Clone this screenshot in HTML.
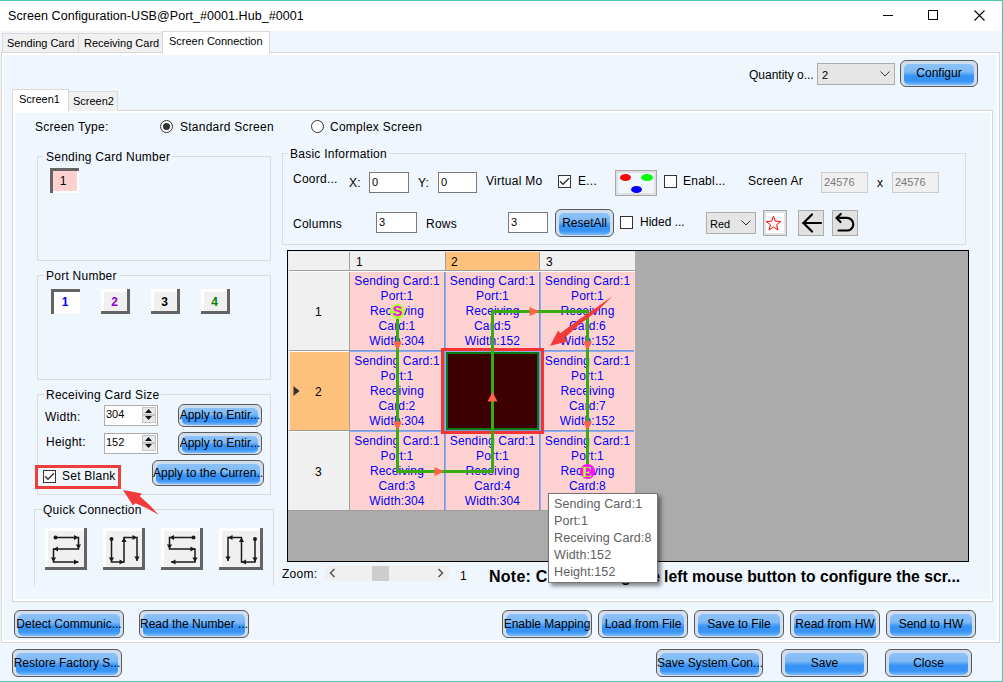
<!DOCTYPE html>
<html><head><meta charset="utf-8">
<style>
*{margin:0;padding:0;box-sizing:border-box}
html,body{width:1003px;height:682px;overflow:hidden}
body{position:relative;background:#eff6fe;font-family:"Liberation Sans",sans-serif;font-size:12px;color:#000}
.a{position:absolute}
.t{position:absolute;white-space:nowrap;line-height:14px;height:14px;letter-spacing:0.25px}
.tab{position:absolute;background:#f0f0f0;border:1px solid #d9d9d9;border-bottom:none}
.pnl{position:absolute;border:1px solid #d6d6d6;box-shadow:inset 0 0 0 2px #fff}
.grp{position:absolute;border:1px solid #dcdcdc}
.lbl{position:absolute;background:#eff6fe;padding:0 2px;white-space:nowrap;line-height:14px;margin-top:1px;letter-spacing:0.25px}
.btn{position:absolute;border:1px solid #5a5a5a;border-radius:6px;background:#cfdded;overflow:hidden}
.btn i{position:absolute;left:3px;right:3px;top:3px;bottom:1px;border-radius:5px;
 background:linear-gradient(#8dc2f7 0,#7db9f6 38%,#58a5f6 47%,#3592f6 58%,#3a95f6 82%,#7cbaf7 100%)}
.btn b{position:absolute;left:0;right:0;top:0;bottom:0;font-weight:normal;text-align:center;white-space:nowrap;color:#000}
.inp{position:absolute;background:#fff;border:1px solid #7a7a7a;white-space:nowrap;padding-left:2px;line-height:18px;font-size:11px}
.chk{position:absolute;width:13px;height:13px;border:1px solid #333;background:#fff}
.sunk{position:absolute;box-shadow:inset 3px 3px 0 #646464,inset -2px -2px 0 #fff;text-align:center;font-weight:bold}
.rais{position:absolute;box-shadow:inset -3px -3px 0 #646464,inset 3px 3px 0 #fff;background:#f0f0f0;text-align:center;font-weight:bold}
</style></head><body>
<!-- window frame -->
<div class="a" style="left:0;top:0;width:1003px;height:31px;background:#fff"></div>
<div class="a" style="left:0;top:0;width:1003px;height:1px;background:#4cc8ae"></div>
<div class="a" style="left:1002px;top:0;width:1px;height:682px;background:#4cc8ae"></div>
<div class="a" style="left:0;top:681px;width:1003px;height:1px;background:#4cc8ae"></div>
<div class="t" style="left:8px;top:9px;font-size:12.5px;letter-spacing:0.07px">Screen Configuration-USB@Port_#0001.Hub_#0001</div>
<!-- window controls -->
<div class="a" style="left:883px;top:15px;width:10px;height:1px;background:#000"></div>
<div class="a" style="left:928px;top:10px;width:10px;height:10px;border:1px solid #000"></div>
<svg class="a" style="left:974px;top:10px" width="11" height="11"><path d="M0.5 0.5L10.5 10.5M10.5 0.5L0.5 10.5" stroke="#000" stroke-width="1.1"/></svg>

<!-- outer tabs -->
<div class="pnl" style="left:1px;top:52px;width:999px;height:591px;"></div>
<div class="tab" style="left:2px;top:33px;width:77px;height:19px;"></div>
<div class="t" style="left:7px;top:36px;font-size:11px;letter-spacing:0">Sending Card</div>
<div class="tab" style="left:78px;top:33px;width:85px;height:19px;"></div>
<div class="t" style="left:84px;top:36px;font-size:11px;letter-spacing:0">Receiving Card</div>
<div class="tab" style="left:162px;top:31px;width:108px;height:23px;background:#fff;"></div>
<div class="t" style="left:169px;top:34px;font-size:11px;letter-spacing:0">Screen Connection</div>

<!-- quantity -->
<div class="t" style="left:749px;top:68px;letter-spacing:0">Quantity o...</div>
<div class="a" style="left:817px;top:63px;width:78px;height:22px;background:#e5e5e5;border:1px solid #adadad"></div>
<div class="t" style="left:822px;top:68px;font-size:11px">2</div>
<svg class="a" style="left:880px;top:71px" width="10" height="6"><path d="M0.5 0.5L5 5L9.5 0.5" stroke="#333" fill="none"/></svg>
<div class="btn" style="left:900px;top:60px;width:78px;height:27px;"><i></i><b style="line-height:25px">Configur</b></div>

<!-- inner tabs -->
<div class="pnl" style="left:12px;top:110px;width:981px;height:492px;"></div>
<div class="tab" style="left:12px;top:89px;width:57px;height:23px;background:#fff;"></div>
<div class="t" style="left:19px;top:92px;font-size:11px;letter-spacing:0">Screen1</div>
<div class="tab" style="left:68px;top:91px;width:50px;height:20px;"></div>
<div class="t" style="left:73px;top:94px;font-size:11px;letter-spacing:0">Screen2</div>

<!-- screen type -->
<div class="t" style="left:35px;top:120px;">Screen Type:</div>
<div class="a" style="left:160px;top:120px;width:13px;height:13px;border-radius:50%;border:1px solid #333;background:#fff"></div>
<div class="a" style="left:163px;top:123px;width:7px;height:7px;border-radius:50%;background:#333"></div>
<div class="t" style="left:180px;top:120px;">Standard Screen</div>
<div class="a" style="left:311px;top:120px;width:13px;height:13px;border-radius:50%;border:1px solid #333;background:#fff"></div>
<div class="t" style="left:330px;top:120px;">Complex Screen</div>


<!-- left column groups -->
<div class="grp" style="left:37px;top:156px;width:234px;height:105px;"></div>
<div class="lbl" style="left:44px;top:149px;">Sending Card Number</div>
<div class="sunk" style="left:50px;top:168px;width:29px;height:25px;background:#ffd0d0;font-weight:normal;line-height:26px;padding-right:3px">1</div>

<div class="grp" style="left:37px;top:275px;width:234px;height:105px;"></div>
<div class="lbl" style="left:44px;top:268px;">Port Number</div>
<div class="sunk" style="left:51px;top:289px;width:29px;height:25px;background:#fff;color:#0000ff;line-height:26px;padding-right:1px">1</div>
<div class="rais" style="left:101px;top:289px;width:29px;height:25px;color:#9400d3;line-height:27px;padding-right:2px;">2</div>
<div class="rais" style="left:151px;top:289px;width:29px;height:25px;color:#000;line-height:27px;padding-right:2px;">3</div>
<div class="rais" style="left:201px;top:289px;width:29px;height:25px;color:#008000;line-height:27px;padding-right:2px;">4</div>

<div class="grp" style="left:37px;top:394px;width:234px;height:101px;"></div>
<div class="lbl" style="left:44px;top:387px;">Receiving Card Size</div>
<div class="t" style="left:45px;top:410px;">Width:</div>
<div class="t" style="left:46px;top:435px;">Height:</div>
<div class="inp" style="left:104px;top:405px;width:54px;height:21px;border-color:#adadad;line-height:17px;padding-left:1px">304</div>
<div class="inp" style="left:104px;top:433px;width:54px;height:21px;border-color:#adadad;line-height:17px;padding-left:1px">152</div>

<div class="btn" style="left:178px;top:404px;width:84px;height:23px;"><i></i><b style="line-height:21px">Apply to Entir...</b></div>
<div class="btn" style="left:178px;top:432px;width:84px;height:23px;"><i></i><b style="line-height:21px">Apply to Entir...</b></div>
<div class="btn" style="left:152px;top:460px;width:112px;height:26px;"><i></i><b style="line-height:24px">Apply to the Curren...</b></div>

<div class="a" style="left:35px;top:465px;width:86px;height:24px;border:3px solid #ee3d3d"></div>
<div class="chk" style="left:43px;top:470px;"></div>
<div class="t" style="left:62px;top:469px;">Set Blank</div>

<div class="grp" style="left:34px;top:509px;width:240px;height:77px;border-bottom:none"></div>
<div class="lbl" style="left:41px;top:502px;">Quick Connection</div>
<div class="rais" style="left:45px;top:528px;width:42px;height:42px;"></div>
<div class="rais" style="left:103px;top:528px;width:42px;height:42px;"></div>
<div class="rais" style="left:161px;top:528px;width:42px;height:42px;"></div>
<div class="rais" style="left:219px;top:528px;width:44px;height:42px;"></div>


<!-- basic information -->
<div class="grp" style="left:282px;top:153px;width:684px;height:92px;"></div>
<div class="lbl" style="left:288px;top:146px;">Basic Information</div>
<div class="t" style="left:293px;top:172px;">Coord...</div>
<div class="t" style="left:349px;top:176px;">X:</div>
<div class="inp" style="left:369px;top:172px;width:40px;height:21px;">0</div>
<div class="t" style="left:418px;top:176px;">Y:</div>
<div class="inp" style="left:438px;top:172px;width:39px;height:21px;">0</div>
<div class="t" style="left:486px;top:174px;">Virtual Mo</div>
<div class="chk" style="left:558px;top:175px;"></div>
<div class="t" style="left:578px;top:174px;">E...</div>
<div class="a" style="left:615px;top:170px;width:42px;height:26px;background:#eff6fe;border:1px solid #a8a8a8;box-shadow:inset 0 0 0 2px #e0e0e0"></div>
<div class="a" style="left:620px;top:174px;width:11px;height:7px;border-radius:50%;background:#f00"></div>
<div class="a" style="left:641px;top:174px;width:12px;height:7px;border-radius:50%;background:#0f0"></div>
<div class="a" style="left:631px;top:186px;width:11px;height:7px;border-radius:50%;background:#00f"></div>
<div class="chk" style="left:664px;top:175px;"></div>
<div class="t" style="left:683px;top:174px;">Enabl...</div>
<div class="t" style="left:748px;top:174px;">Screen Ar</div>
<div class="inp" style="left:821px;top:172px;width:47px;height:21px;background:#f0f0f0;border-color:#ccc;color:#7a7a7a">24576</div>
<div class="t" style="left:877px;top:176px;">x</div>
<div class="inp" style="left:892px;top:172px;width:47px;height:21px;background:#f0f0f0;border-color:#ccc;color:#7a7a7a">24576</div>

<div class="t" style="left:293px;top:217px;">Columns</div>
<div class="inp" style="left:376px;top:212px;width:41px;height:21px;">3</div>
<div class="t" style="left:426px;top:217px;">Rows</div>
<div class="inp" style="left:508px;top:212px;width:40px;height:21px;">3</div>
<div class="btn" style="left:555px;top:209px;width:59px;height:28px;"><i></i><b style="line-height:26px">ResetAll</b></div>
<div class="chk" style="left:620px;top:216px;"></div>
<div class="t" style="left:640px;top:215px;letter-spacing:0">Hided ...</div>
<div class="a" style="left:706px;top:212px;width:50px;height:22px;background:#e5e5e5;border:1px solid #adadad"></div>
<div class="t" style="left:710px;top:217px;font-size:11px;letter-spacing:0">Red</div>
<svg class="a" style="left:741px;top:220px" width="10" height="6"><path d="M0.5 0.5L5 5L9.5 0.5" stroke="#333" fill="none"/></svg>
<div class="a" style="left:763px;top:210px;width:24px;height:26px;background:#fff;border:1px solid #a8a8a8;box-shadow:inset 0 0 0 2px #e1e1e1"></div>
<div class="a" style="left:798px;top:210px;width:26px;height:26px;background:#e1e1e1;border:1px solid #adadad"></div>
<div class="a" style="left:832px;top:210px;width:26px;height:26px;background:#e1e1e1;border:1px solid #adadad"></div>

<!-- grid -->
<div class="a" style="left:287px;top:250px;width:682px;height:312px;background:#ababab;border:1px solid #000"></div>


<style>
.cell{position:absolute;text-align:center;line-height:15px;color:#0000f8;white-space:nowrap;letter-spacing:0.15px;margin-top:1px}
</style>
<div class="a" style="left:288px;top:251px;width:347px;height:1px;background:#e8e8e8"></div>
<div class="a" style="left:288px;top:251px;width:1px;height:259px;background:#e8e8e8"></div>
<div class="a" style="left:288px;top:510px;width:347px;height:1px;background:#a0a0a0"></div>
<!-- header row -->
<div class="a" style="left:289px;top:252px;width:346px;height:18px;background:#f0f0f0"></div>
<div class="a" style="left:446px;top:252px;width:93px;height:18px;background:#fdc17b"></div>
<div class="a" style="left:289px;top:270px;width:346px;height:1px;background:#a0a0a0"></div>
<div class="a" style="left:289px;top:271px;width:346px;height:1px;background:#fafafa"></div>
<div class="a" style="left:349px;top:252px;width:1px;height:18px;background:#a0a0a0"></div>
<div class="a" style="left:445px;top:252px;width:1px;height:18px;background:#a0a0a0"></div>
<div class="a" style="left:539px;top:252px;width:1px;height:18px;background:#a0a0a0"></div>
<div class="t" style="left:356px;top:255px;">1</div>
<div class="t" style="left:451px;top:255px;">2</div>
<div class="t" style="left:546px;top:255px;">3</div>
<!-- row headers -->
<div class="a" style="left:289px;top:272px;width:60px;height:238px;background:#f0f0f0"></div>
<div class="a" style="left:290px;top:352px;width:59px;height:78px;background:#fdc17b"></div>
<div class="a" style="left:289px;top:350px;width:60px;height:1px;background:#a0a0a0"></div>
<div class="a" style="left:289px;top:351px;width:60px;height:1px;background:#fafafa"></div>
<div class="a" style="left:289px;top:430px;width:60px;height:1px;background:#a0a0a0"></div>
<div class="a" style="left:289px;top:431px;width:60px;height:1px;background:#fafafa"></div>
<div class="a" style="left:349px;top:272px;width:1px;height:238px;background:#a0a0a0"></div>
<div class="t" style="left:315px;top:305px;">1</div>
<div class="t" style="left:315px;top:385px;">2</div>
<div class="t" style="left:315px;top:465px;">3</div>
<svg class="a" style="left:293px;top:385px" width="8" height="12"><path d="M0.5 1L6.5 6L0.5 11Z" fill="#333"/></svg>
<!-- cells -->
<div class="a" style="left:350px;top:272px;width:285px;height:238px;background:#ffd2d2"></div>
<div class="a" style="left:444px;top:272px;width:2px;height:238px;background:linear-gradient(90deg,#6a8ed8,#9ab6f0)"></div>
<div class="a" style="left:539px;top:272px;width:2px;height:238px;background:linear-gradient(90deg,#6a8ed8,#9ab6f0)"></div>
<div class="a" style="left:350px;top:350px;width:284px;height:2px;background:linear-gradient(#6a8ed8,#9ab6f0)"></div>
<div class="a" style="left:350px;top:430px;width:284px;height:2px;background:linear-gradient(#6a8ed8,#9ab6f0)"></div>
<div class="cell" style="left:350px;top:273px;width:94px;">Sending Card:1<br>Port:1<br>Receiving<br>Card:1<br>Width:304</div>
<div class="cell" style="left:446px;top:273px;width:93px;">Sending Card:1<br>Port:1<br>Receiving<br>Card:5<br>Width:152</div>
<div class="cell" style="left:541px;top:273px;width:93px;">Sending Card:1<br>Port:1<br>Receiving<br>Card:6<br>Width:152</div>
<div class="cell" style="left:350px;top:353px;width:94px;">Sending Card:1<br>Port:1<br>Receiving<br>Card:2<br>Width:304</div>
<div class="cell" style="left:541px;top:353px;width:93px;">Sending Card:1<br>Port:1<br>Receiving<br>Card:7<br>Width:152</div>
<div class="cell" style="left:350px;top:433px;width:94px;">Sending Card:1<br>Port:1<br>Receiving<br>Card:3<br>Width:304</div>
<div class="cell" style="left:446px;top:433px;width:93px;">Sending Card:1<br>Port:1<br>Receiving<br>Card:4<br>Width:304</div>
<div class="cell" style="left:541px;top:433px;width:93px;">Sending Card:1<br>Port:1<br>Receiving<br>Card:8<br>Width:152</div>

<!-- blank block -->
<div class="a" style="left:446px;top:352px;width:93px;height:78px;border:2px solid #087a12;background:#3c0000"></div>
<div class="a" style="left:441px;top:348px;width:103px;height:86px;border:3px solid #f43434"></div>
<!-- path -->
<svg class="a" style="left:0;top:0" width="1003" height="682">
<path d="M397.5 311V471.5H492.5V311.5H587.5V471" stroke="#36ac10" stroke-width="3" fill="none"/>
<g fill="#ff6347">
<path d="M393 341.5H402L397.5 350.5Z"/>
<path d="M393 421.5H402L397.5 430.5Z"/>
<path d="M434.5 467V476L444 471.5Z"/>
<path d="M487.5 401.5H497.5L492.5 392Z"/>
<path d="M529.5 307V316L539.5 311.5Z"/>
<path d="M583 341.5H592L587.5 350.5Z"/>
<path d="M583 421.5H592L587.5 430.5Z"/>
</g>
<circle cx="397.5" cy="311.5" r="7.5" fill="#adff2f"/>
<circle cx="587.5" cy="471.5" r="7.5" fill="#ff10f0"/>
<text x="397.5" y="315.8" text-anchor="middle" font-family="Liberation Sans" font-weight="bold" font-size="15" fill="#ff00ff">S</text>
<text x="587" y="476.5" text-anchor="middle" font-family="Liberation Serif" font-weight="bold" font-size="15.5" fill="#adff2f">E</text>
<!-- annotation arrows -->
<path d="M550.1 345.8L567.1 341.7L565 337.6L580 324L598 310.6L612.3 296.3L598 306.4L580 318.8L560.3 333.2L558.1 330.4Z" fill="#f23a3a"/>
<path d="M123 490L141.7 493.5L139.8 496.3L150 505.5L158.8 515L148.5 509L135.6 503.2L132.8 505.2Z" fill="#f23a3a"/>
</svg>


<!-- spinner buttons -->
<div class="a" style="left:142px;top:407px;width:14px;height:8px;background:#e8e8e8;border:1px solid #c4c4c4"></div>
<div class="a" style="left:142px;top:415px;width:14px;height:8px;background:#e8e8e8;border:1px solid #c4c4c4"></div>
<div class="a" style="left:142px;top:435px;width:14px;height:8px;background:#e8e8e8;border:1px solid #c4c4c4"></div>
<div class="a" style="left:142px;top:443px;width:14px;height:8px;background:#e8e8e8;border:1px solid #c4c4c4"></div>
<svg class="a" style="left:0;top:0" width="1003" height="682">
<path d="M55.5 537.5L78.5 537.5L78.5 549L53.5 549L53.5 562L78.5 562" stroke="#1a1a1a" stroke-width="1.5" fill="none"/><path d="M78.5 537.5L74.0 540.1L74.0 534.9ZM78.5 549.0L75.9 544.5L81.1 544.5ZM53.5 549.0L58.0 546.4L58.0 551.6ZM53.5 562.0L50.9 557.5L56.1 557.5ZM78.5 562.0L74.0 564.6L74.0 559.4Z" fill="#1a1a1a"/><circle cx="55.5" cy="537.5" r="2" fill="#1a1a1a"/>
<path d="M111.5 539L111.5 562L124 562L124 537.5L137 537.5L137 561" stroke="#1a1a1a" stroke-width="1.5" fill="none"/><path d="M111.5 562.0L108.9 557.5L114.1 557.5ZM124.0 562.0L119.5 564.6L119.5 559.4ZM124.0 537.5L126.6 542.0L121.4 542.0ZM137.0 537.5L132.5 540.1L132.5 534.9ZM137.0 561.0L134.4 556.5L139.6 556.5Z" fill="#1a1a1a"/><circle cx="111.5" cy="539" r="2" fill="#1a1a1a"/>
<path d="M193.5 537.5L169.5 537.5L169.5 549L195 549L195 562L171 562" stroke="#1a1a1a" stroke-width="1.5" fill="none"/><path d="M169.5 537.5L174.0 534.9L174.0 540.1ZM169.5 549.0L166.9 544.5L172.1 544.5ZM195.0 549.0L190.5 551.6L190.5 546.4ZM195.0 562.0L192.4 557.5L197.6 557.5ZM171.0 562.0L175.5 559.4L175.5 564.6Z" fill="#1a1a1a"/><circle cx="193.5" cy="537.5" r="2" fill="#1a1a1a"/>
<path d="M255 539L255 562L241.5 562L241.5 537.5L228 537.5L228 561" stroke="#1a1a1a" stroke-width="1.5" fill="none"/><path d="M255.0 562.0L252.4 557.5L257.6 557.5ZM241.5 562.0L246.0 559.4L246.0 564.6ZM241.5 537.5L244.1 542.0L238.9 542.0ZM228.0 537.5L232.5 534.9L232.5 540.1ZM228.0 561.0L225.4 556.5L230.6 556.5Z" fill="#1a1a1a"/><circle cx="255" cy="539" r="2" fill="#1a1a1a"/>
<path d="M560 181.2L563 184.2L569 178.2" stroke="#333" stroke-width="1.4" fill="none"/>
<path d="M45 476.2L48 479.2L54 473.2" stroke="#333" stroke-width="1.4" fill="none"/>
<path d="M145 413H152L148.5 409Z M145 416H152L148.5 420Z" fill="#111"/>
<path d="M145 441H152L148.5 437Z M145 444H152L148.5 448Z" fill="#111"/>
<path d="M773.50 216.20L775.38 221.21L780.73 221.45L776.54 224.79L777.97 229.95L773.50 227.00L769.03 229.95L770.46 224.79L766.27 221.45L771.62 221.21Z" stroke="#f00" stroke-width="1" fill="none"/>
<path d="M803 223H821M812 214.5L803.5 223L812 231.5" stroke="#000" stroke-width="2.2" fill="none" stroke-linecap="round" stroke-linejoin="round"/>
<path d="M838.5 230.5H847A6.3 6.3 0 0 0 847 217.9H837M840.8 214L836.5 218L840.5 222" stroke="#000" stroke-width="2.2" fill="none" stroke-linecap="round" stroke-linejoin="round"/>
</svg>

<!-- zoom / note -->
<div class="t" style="left:282px;top:567px;">Zoom:</div>
<div class="a" style="left:325px;top:566px;width:124px;height:15px;background:#f0f0f0"></div>
<div class="a" style="left:372px;top:566px;width:17px;height:15px;background:#cdcdcd"></div>
<svg class="a" style="left:329px;top:568px" width="8" height="10"><path d="M5.5 1L1.5 5L5.5 9" stroke="#555" stroke-width="1.5" fill="none"/></svg>
<svg class="a" style="left:437px;top:568px" width="8" height="10"><path d="M1.5 1L5.5 5L1.5 9" stroke="#555" stroke-width="1.5" fill="none"/></svg>
<div class="t" style="left:460px;top:569px;">1</div>
<div class="t" style="left:489px;top:568px;font-size:16px;font-weight:bold;line-height:18px;height:18px">Note: C</div>
<div class="t" style="left:621px;top:568px;font-size:16px;font-weight:bold;line-height:18px;height:18px">g the</div>
<div class="t" style="left:664px;top:568px;font-size:15.7px;font-weight:bold;line-height:18px;height:18px;letter-spacing:0.04px">left mouse button to configure the scr...</div>

<!-- bottom buttons -->
<div class="btn" style="left:14px;top:610px;width:110px;height:28px;"><i></i><b style="line-height:26px">Detect Communic...</b></div>
<div class="btn" style="left:139px;top:610px;width:110px;height:28px;"><i></i><b style="line-height:26px">Read the Number ...</b></div>
<div class="btn" style="left:502px;top:610px;width:90px;height:28px;"><i></i><b style="line-height:26px">Enable Mapping</b></div>
<div class="btn" style="left:598px;top:610px;width:90px;height:28px;"><i></i><b style="line-height:26px">Load from File</b></div>
<div class="btn" style="left:694px;top:610px;width:90px;height:28px;"><i></i><b style="line-height:26px">Save to File</b></div>
<div class="btn" style="left:790px;top:610px;width:90px;height:28px;"><i></i><b style="line-height:26px">Read from HW</b></div>
<div class="btn" style="left:886px;top:610px;width:90px;height:28px;"><i></i><b style="line-height:26px">Send to HW</b></div>
<div class="btn" style="left:12px;top:649px;width:110px;height:28px;"><i></i><b style="line-height:26px">Restore Factory S...</b></div>
<div class="btn" style="left:656px;top:649px;width:107px;height:28px;"><i></i><b style="line-height:26px">Save System Con...</b></div>
<div class="btn" style="left:781px;top:649px;width:87px;height:28px;"><i></i><b style="line-height:26px">Save</b></div>
<div class="btn" style="left:885px;top:649px;width:87px;height:28px;"><i></i><b style="line-height:26px">Close</b></div>

<!-- tooltip -->
<div class="a" style="left:548px;top:493px;width:110px;height:90px;background:#fff;border:1px solid #767676;box-shadow:3px 3px 4px rgba(0,0,0,.45)"></div>
<div class="a" style="left:554px;top:496px;line-height:17px;color:#606060;white-space:nowrap;font-size:12.5px;letter-spacing:0.1px">Sending Card:1<br>Port:1<br>Receiving Card:8<br>Width:152<br>Height:152</div>

</body></html>
